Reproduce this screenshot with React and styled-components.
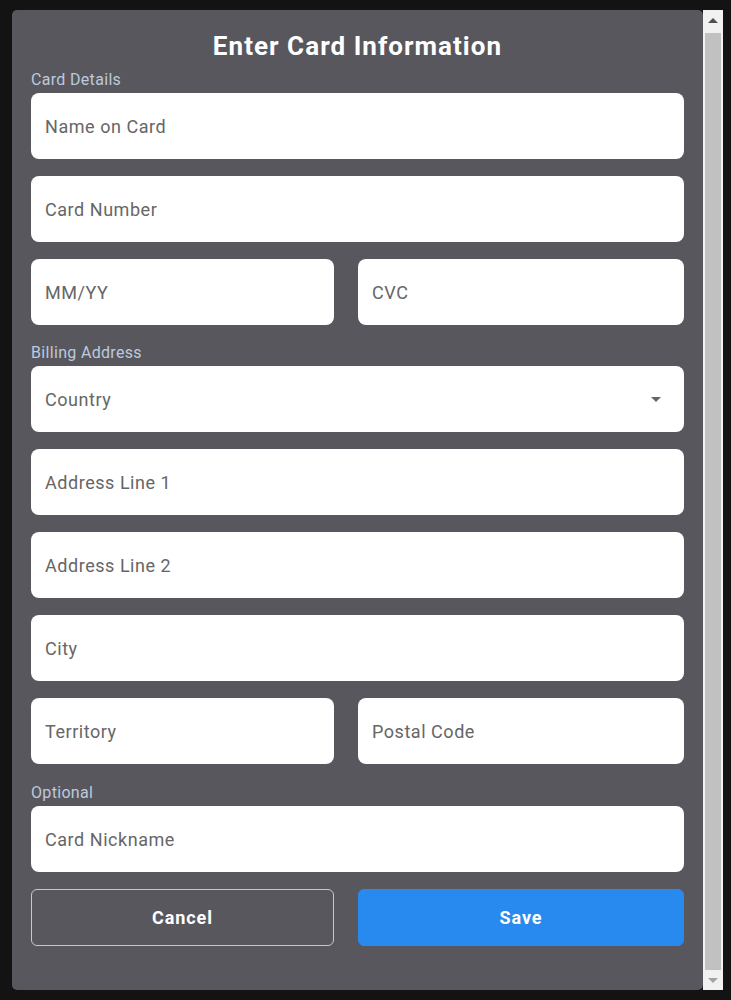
import styled, { createGlobalStyle } from "styled-components"

const GlobalStyle = createGlobalStyle`
    * { box-sizing: border-box; }
    html, body {
        margin: 0;
        padding: 0;
        background: #131313;
        font-family: 'Roboto', 'Liberation Sans', sans-serif;
    }
`

export default function App() {
    return (
        <>
        <GlobalStyle />
        <Page>
            <Panel>
                <Title>Enter Card Information</Title>
                <Section $space={9}>
                    <SectionLabel>Card Details</SectionLabel>
                    <Fields>
                        <Field placeholder="Name on Card" />
                        <Field placeholder="Card Number" />
                        <Pair>
                            <Field placeholder="MM/YY" />
                            <Field placeholder="CVC" />
                        </Pair>
                    </Fields>
                </Section>
                <Section $space={18}>
                    <SectionLabel>Billing Address</SectionLabel>
                    <Fields>
                        <SelectWrap>
                            <Select defaultValue="">
                                <option value="" disabled>Country</option>
                                <option value="us">United States</option>
                                <option value="ca">Canada</option>
                            </Select>
                        </SelectWrap>
                        <Field placeholder="Address Line 1" />
                        <Field placeholder="Address Line 2" />
                        <Field placeholder="City" />
                        <Pair>
                            <Field placeholder="Territory" />
                            <Field placeholder="Postal Code" />
                        </Pair>
                    </Fields>
                </Section>
                <Section $space={19}>
                    <SectionLabel>Optional</SectionLabel>
                    <Fields>
                        <Field placeholder="Card Nickname" />
                    </Fields>
                </Section>
                <Buttons>
                    <ActionButton>Cancel</ActionButton>
                    <ActionButton $primary>Save</ActionButton>
                </Buttons>
            </Panel>
            <Scrollbar>
                <ScrollArrow $up />
                <ScrollTrack>
                    <ScrollThumb />
                </ScrollTrack>
                <ScrollArrow />
            </Scrollbar>
        </Page>
        </>
    )
}

const Page = styled.div`
    display: flex;
    height: 1000px;
    padding: 10px 8px 10px 12px;
`
const Panel = styled.div`
    flex: 1;
    height: 980px;
    background: #58575e;
    border-radius: 5px;
    padding: 21px 19px 0;
    overflow: hidden;
`
const Scrollbar = styled.div`
    width: 20px;
    height: 980px;
    display: flex;
    flex-direction: column;
    background: #f1f1f1;
`
const ScrollArrow = styled.div`
    height: ${props => props.$up ? "23px" : "20px"};
    display: flex;
    align-items: center;
    justify-content: center;
    padding-bottom: ${props => props.$up ? "2px" : "0"};
    &::before {
        content: "";
        border-left: 5px solid transparent;
        border-right: 5px solid transparent;
        ${props => props.$up
            ? "border-bottom: 5px solid #505050;"
            : "border-top: 5px solid #a3a3a3;"}
    }
`
const ScrollTrack = styled.div`
    flex: 1;
    padding: 0 2px;
    display: flex;
`
const ScrollThumb = styled.div`
    flex: 1;
    background: #c1c1c1;
`
const Title = styled.h1`
    margin: 0;
    font-size: 26px;
    font-weight: 700;
    line-height: 30px;
    letter-spacing: 0.04em;
    text-align: center;
    color: #ffffff;
`
const Section = styled.div`
    margin-top: ${props => props.$space}px;
`
const SectionLabel = styled.div`
    font-size: 16px;
    line-height: 19px;
    letter-spacing: 0.02em;
    color: #bccadb;
    margin-bottom: 4px;
`
const Fields = styled.div`
    display: flex;
    flex-direction: column;
    gap: 17px;
`
const Pair = styled.div`
    display: grid;
    grid-template-columns: 303fr 326fr;
    gap: 24px;
`
const Field = styled.input`
    width: 100%;
    height: 66px;
    border: none;
    border-radius: 8px;
    background: #ffffff;
    padding: 0 14px;
    font-family: 'Roboto', 'Liberation Sans', sans-serif;
    font-size: 18px;
    letter-spacing: 0.03em;
    color: #333;
    outline: none;
    &::placeholder {
        color: #666666;
    }
`
const SelectWrap = styled.div`
    position: relative;
    &::after {
        content: "";
        position: absolute;
        right: 23px;
        top: 31px;
        border-left: 5px solid transparent;
        border-right: 5px solid transparent;
        border-top: 5px solid #666666;
        pointer-events: none;
    }
`
const Select = styled.select`
    appearance: none;
    width: 100%;
    height: 66px;
    border: none;
    border-radius: 8px;
    background: #ffffff;
    padding: 0 14px;
    font-family: 'Roboto', 'Liberation Sans', sans-serif;
    font-size: 18px;
    letter-spacing: 0.03em;
    color: #666666;
    outline: none;
`
const Buttons = styled.div`
    display: grid;
    grid-template-columns: 303fr 326fr;
    gap: 24px;
    margin-top: 17px;
`
const ActionButton = styled.button`
    height: 57px;
    border-radius: 6px;
    border: 1px solid ${props => props.$primary ? "#2889ee" : "#c9c9cc"};
    background: ${props => props.$primary ? "#2889ee" : "transparent"};
    font-family: 'Roboto', 'Liberation Sans', sans-serif;
    font-size: 18px;
    font-weight: 700;
    letter-spacing: 0.05em;
    color: #ffffff;
    cursor: pointer;
`
